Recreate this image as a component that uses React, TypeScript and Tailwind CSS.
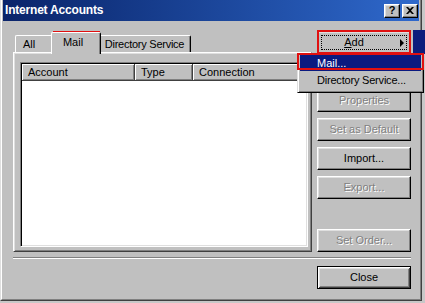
import type { ReactNode } from "react";

const raised =
  "border border-t-white border-l-white border-r-black border-b-black shadow-[inset_-1px_-1px_#808080,inset_1px_1px_#dfdfdf]";

function Button({ label, disabled = false }: { label?: ReactNode; disabled?: boolean }) {
  return (
    <div className={`h-[23px] w-[94px] shrink-0 flex items-center justify-center bg-[#c0c0c0] ${raised}`}>
      {label && (
        <span className={disabled ? "text-[#808080] [text-shadow:1px_1px_0_#ffffff]" : "text-black"}>{label}</span>
      )}
    </div>
  );
}

function HeaderCell({ label, className = "" }: { label: string; className?: string }) {
  return (
    <div
      className={`h-full flex items-center pl-[6px] bg-[#c0c0c0] shadow-[inset_-1px_-1px_#404040,inset_1px_1px_#ffffff,inset_-2px_-2px_#808080] ${className}`}
    >
      {label}
    </div>
  );
}

export default function App() {
  return (
    <div className="relative w-[425px] h-[303px] overflow-hidden bg-[#c8c8c8] font-['Liberation_Sans',Arial,sans-serif] text-[11px] leading-[13px] text-black">
      <div className="w-[422px] h-[301px] border-l border-r border-b border-l-[#dfdfdf] border-r-[#404040] border-b-[#404040]">
        <div className="h-full flex flex-col bg-[#c0c0c0] px-[1px] pb-[1px] border-l border-r border-b border-l-white border-r-[#808080] border-b-[#808080]">
          {/* title bar */}
          <div className="h-[21px] shrink-0 flex items-center justify-between pl-[2px] pr-[1px] bg-linear-to-r from-[#0a246a] to-[#2f69cc]">
            <span className="text-white font-bold text-[12px] tracking-[-0.2px]">Internet Accounts</span>
            <div className="flex gap-[2px]">
              <div className={`w-[16px] h-[14px] flex items-center justify-center bg-[#c0c0c0] ${raised}`}>
                <span className="font-bold text-[11px] leading-none">?</span>
              </div>
              <div className={`w-[16px] h-[14px] flex items-center justify-center bg-[#c0c0c0] ${raised}`}>
                <svg width="8" height="7" viewBox="0 0 8 7">
                  <path d="M0 0h2l2 2 2-2h2L5 3.5 8 7H6L4 5 2 7H0l3-3.5z" fill="#000" />
                </svg>
              </div>
            </div>
          </div>

          {/* body */}
          <div className="flex-1 flex flex-col pl-[10px] pr-[8px] pt-[10px]">
            <div className="flex gap-[5px]">
              <div className="w-[299px] flex flex-col">
                {/* tabs */}
                <div className="h-[21px] flex items-end pl-[2px]">
                  <div className="w-[38px] h-[17px] pl-[7px] flex items-center border-t border-l border-white rounded-tl-[2px]">
                    All
                  </div>
                  <div className="relative z-10 -mx-[2px] -mb-[2px] w-[50px] h-[22px] pt-[3px] pr-[6px] flex justify-center bg-[#c0c0c0] border-t border-l border-r border-t-white border-l-white border-r-black rounded-t-[2px] shadow-[inset_-1px_0_#808080]">
                    Mail
                  </div>
                  <div className="w-[92px] h-[17px] flex items-center justify-center tracking-[-0.25px] border-t border-r border-t-white border-r-black rounded-tr-[2px] shadow-[inset_-1px_0_#808080]">
                    Directory Service
                  </div>
                </div>
                {/* tab page */}
                <div className="h-[200px] flex pl-[6px] pt-[9px] pr-[3px] pb-[4px] border border-t-white border-l-white border-r-[#404040] border-b-[#404040] shadow-[inset_1px_1px_#dfdfdf,inset_-1px_-1px_#808080]">
                  <div className="flex-1 flex flex-col p-[1px] bg-white border border-t-[#808080] border-l-[#808080] border-r-white border-b-white shadow-[inset_1px_1px_#000000,inset_-1px_-1px_#dfdfdf]">
                    <div className="h-[17px] flex">
                      <HeaderCell label="Account" className="w-[113px]" />
                      <HeaderCell label="Type" className="w-[58px]" />
                      <HeaderCell label="Connection" className="flex-1" />
                    </div>
                  </div>
                </div>
              </div>

              {/* buttons */}
              <div className="w-[94px] flex flex-col gap-[6px]">
                <div
                  className={`h-[23px] w-[94px] shrink-0 flex items-center bg-[#c0c0c0] ${raised} outline-1 outline-dotted outline-black outline-offset-[-5px]`}
                >
                  <span className="flex-1 text-center pr-[10px]">
                    <span className="underline">A</span>dd
                  </span>
                  <span className="w-0 h-0 mr-[6px] border-y-[4px] border-y-transparent border-l-[4px] border-l-black" />
                </div>
                {/* Remove button, covered by the menu */}
                <Button disabled />
                <Button label="Properties" disabled />
                <Button label="Set as Default" disabled />
                <Button label="Import..." />
                <Button label="Export..." disabled />
                <div className="mt-auto">
                  <Button label="Set Order..." disabled />
                </div>
              </div>
            </div>

            {/* separator */}
            <div className="mt-[5px] h-[2px] border-t border-b border-t-[#808080] border-b-white" />

            <div className="mt-[7px] flex justify-end">
              <div className="h-[23px] w-[94px] flex items-center justify-center bg-[#c0c0c0] border border-black shadow-[inset_1px_1px_#ffffff,inset_-1px_-1px_#404040,inset_2px_2px_#dfdfdf,inset_-2px_-2px_#808080]">
                Close
              </div>
            </div>
          </div>
        </div>
      </div>

      {/* popup menu of Add */}
      <div className="absolute left-[297px] top-[53px] w-[127px] px-[2px] pt-[1px] pb-[3px] bg-[#c0c0c0] border border-t-[#dfdfdf] border-l-[#dfdfdf] border-r-black border-b-black shadow-[inset_1px_1px_#ffffff,inset_-1px_-1px_#808080]">
        <div className="h-[16px] flex items-center pl-[17px] bg-[#0a1a80] text-white">Mail...</div>
        <div className="h-[18px] flex items-center pl-[17px] tracking-[-0.2px]">Directory Service...</div>
      </div>

      <div className="absolute left-[413px] top-[30px] w-[12px] h-[24px] bg-[#0c1c7c]" />

      {/* red highlight frames */}
      <div className="absolute left-[53px] top-[31px] w-[47px] h-[22px] border-2 border-[#e01010]" />
      <div className="absolute left-[317px] top-[30px] w-[94px] h-[24px] border-2 border-[#e01010]" />
      <div className="absolute left-[297px] top-[53px] w-[127px] h-[17px] border-2 border-[#e01010]" />
    </div>
  );
}
